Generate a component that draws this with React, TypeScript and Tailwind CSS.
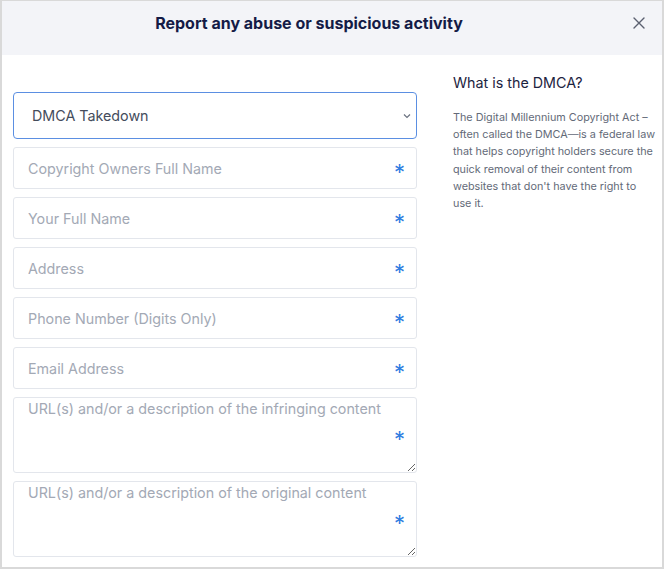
import React from "react";

type FieldProps = {
  placeholder: string;
  multi?: boolean;
};

const Field = ({ placeholder, multi }: FieldProps) => {
  return (
    <div className="relative">
      {multi ? (
        <textarea
          placeholder={placeholder}
          className="block w-full h-[76px] border border-[#e3e6ec] rounded-[3px] pl-[14px] pr-8 pt-[1px] text-[14.3px] leading-[20px] text-[#374151] placeholder:text-[#a3a9b5] outline-none"
        ></textarea>
      ) : (
        <input
          placeholder={placeholder}
          className="block w-full h-[42px] border border-[#e3e6ec] rounded-[3px] pl-[14px] pr-10 text-[14.3px] text-[#374151] placeholder:text-[#a3a9b5] outline-none"
        />
      )}
      <span className="absolute right-[12px] top-1/2 -translate-y-1/2 text-[22px] leading-none text-[#2f7de1] pt-[7px]">
        *
      </span>
    </div>
  );
};

const App = () => {
  return (
    <div
      className="w-[664px] h-[569px] bg-white border-2 border-t border-[#d9d9d9] overflow-hidden"
      style={{ fontFamily: "Inter, 'Noto Sans', sans-serif" }}
    >
      <div className="relative h-[54px] bg-[#f3f4f8] flex items-start justify-center pt-[11px] pr-[46px]">
        <h1 className="text-[16px] leading-[22px] font-bold text-[#141b46]">
          Report any abuse or suspicious activity
        </h1>
        <button className="absolute right-[16px] top-[15px] text-[#5b6070]">
          <svg width="14" height="14" viewBox="0 0 14 14" fill="none" stroke="currentColor" strokeWidth="1.4" strokeLinecap="round">
            <path d="M2 2 L12 12 M12 2 L2 12" />
          </svg>
        </button>
      </div>

      <div className="flex pl-[11px] pt-[37px]">
        <div className="w-[404px] flex flex-col gap-[8px]">
          <div className="relative">
            <div className="h-[47px] border border-[#5b8fe2] rounded-[4px] pl-[18px] flex items-center text-[14.3px] text-[#444c5c]">
              DMCA Takedown
            </div>
            <svg className="absolute right-[5px] top-[20px] text-[#6b7280]" width="10" height="8" viewBox="0 0 10 8" fill="none" stroke="currentColor" strokeWidth="1.2">
              <path d="M2 2.5 L5 5.5 L8 2.5" />
            </svg>
          </div>
          <Field placeholder="Copyright Owners Full Name" />
          <Field placeholder="Your Full Name" />
          <Field placeholder="Address" />
          <Field placeholder="Phone Number (Digits Only)" />
          <Field placeholder="Email Address" />
          <Field placeholder="URL(s) and/or a description of the infringing content" multi />
          <Field placeholder="URL(s) and/or a description of the original content" multi />
        </div>

        <div className="ml-[36px] w-[205px] -mt-[19px]">
          <h2 className="text-[14.3px] text-[#1c2340] leading-[20px]">What is the DMCA?</h2>
          <p className="mt-[16px] text-[10.8px] leading-[17.2px] text-[#636a78]">
            The Digital Millennium Copyright Act – often called the DMCA—is a federal law that helps copyright holders secure the quick removal of their content from websites that don't have the right to
            <br />
            use it.
          </p>
        </div>
      </div>
    </div>
  );
};

export default App;
